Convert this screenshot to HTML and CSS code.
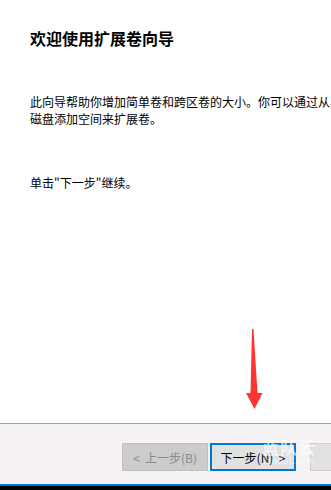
FILE: index.html
```html
<!DOCTYPE html>
<html lang="zh-CN">
<head>
    <meta charset="UTF-8">
    <meta name="viewport" content="width=device-width, initial-scale=1.0">
    <title>扩展卷向导</title>
    <link rel="stylesheet" href="styles.css">
</head>
<body>

<div class="wizard">
    <div class="wizard-body">
        <h1>欢迎使用扩展卷向导</h1>
        <p class="intro">此向导帮助你增加简单卷和跨区卷的大小。你可以通过从其他<br>磁盘添加空间来扩展卷。</p>
        <p class="hint">单击"下一步"继续。</p>

        <svg class="arrow" width="20" height="84" viewBox="0 0 20 84">
            <polygon points="6,0 7.5,0 11.5,64 16.5,64 8.5,80 0,64 4.5,64" fill="#ff3535"/>
        </svg>
    </div>

    <div class="wizard-footer">
        <button class="btn" disabled>&lt;&nbsp; 上一步(B)</button>
        <button class="btn btn-default">下一步(N) &nbsp;&gt;</button>
        <button class="btn btn-cancel">取消</button>

        <div class="watermark">
            <span class="wm-name">蓝队云</span>
            <span class="wm-url">landui.com</span>
        </div>
    </div>
</div>

</body>
</html>
```

FILE: styles.css
```css
* {
    box-sizing: border-box;
    margin: 0;
    padding: 0;
}
html, body {
    width: 331px;
    height: 490px;
    overflow: hidden;
}
body {
    font-family: 'Noto Sans CJK SC', 'Liberation Sans', sans-serif;
    font-size: 12px;
    color: #000;
    background-color: #000;
}
.wizard {
    width: 460px;
    height: 486px;
    display: flex;
    flex-direction: column;
    border-bottom: 2px solid #0078d7;
}
.wizard-body {
    position: relative;
    height: 423px;
    background-color: #fff;
    padding: 27px 0 0 30px;
}
h1 {
    font-size: 16px;
    font-weight: bold;
    line-height: 22px;
    margin-bottom: 44px;
}
.intro {
    width: 360px;
    line-height: 17px;
    margin-bottom: 47px;
}
.hint {
    line-height: 17px;
}
.arrow {
    position: absolute;
    left: 246px;
    top: 329px;
}
.wizard-footer {
    position: relative;
    flex: 1;
    background-color: #f5f1f5;
    border-top: 1px solid #a0a0a0;
    display: flex;
    align-items: flex-start;
    gap: 2px;
    padding: 19px 0 0 122px;
}
.btn {
    width: 86px;
    height: 28px;
    font-family: inherit;
    font-size: 12px;
    background-color: #e1e1e1;
    border: 1px solid #adadad;
    color: #000;
}
.btn:disabled {
    background-color: #cccccc;
    border-color: #bfbfbf;
    color: #8a8a8a;
}
.btn-default {
    border: 2px solid #0078d7;
}
.btn-cancel {
    margin-left: 12px;
    background-color: #e3e0e3;
    border-color: #cfcfcf;
}
.watermark {
    position: absolute;
    left: 262px;
    top: 14px;
    display: flex;
    flex-direction: column;
    align-items: center;
    color: rgba(255, 255, 255, 0.7);
    line-height: 1;
}
.wm-name {
    font-size: 17px;
    font-weight: bold;
    letter-spacing: 1px;
}
.wm-url {
    font-size: 8px;
    margin-top: 2px;
    letter-spacing: 1px;
}
```
